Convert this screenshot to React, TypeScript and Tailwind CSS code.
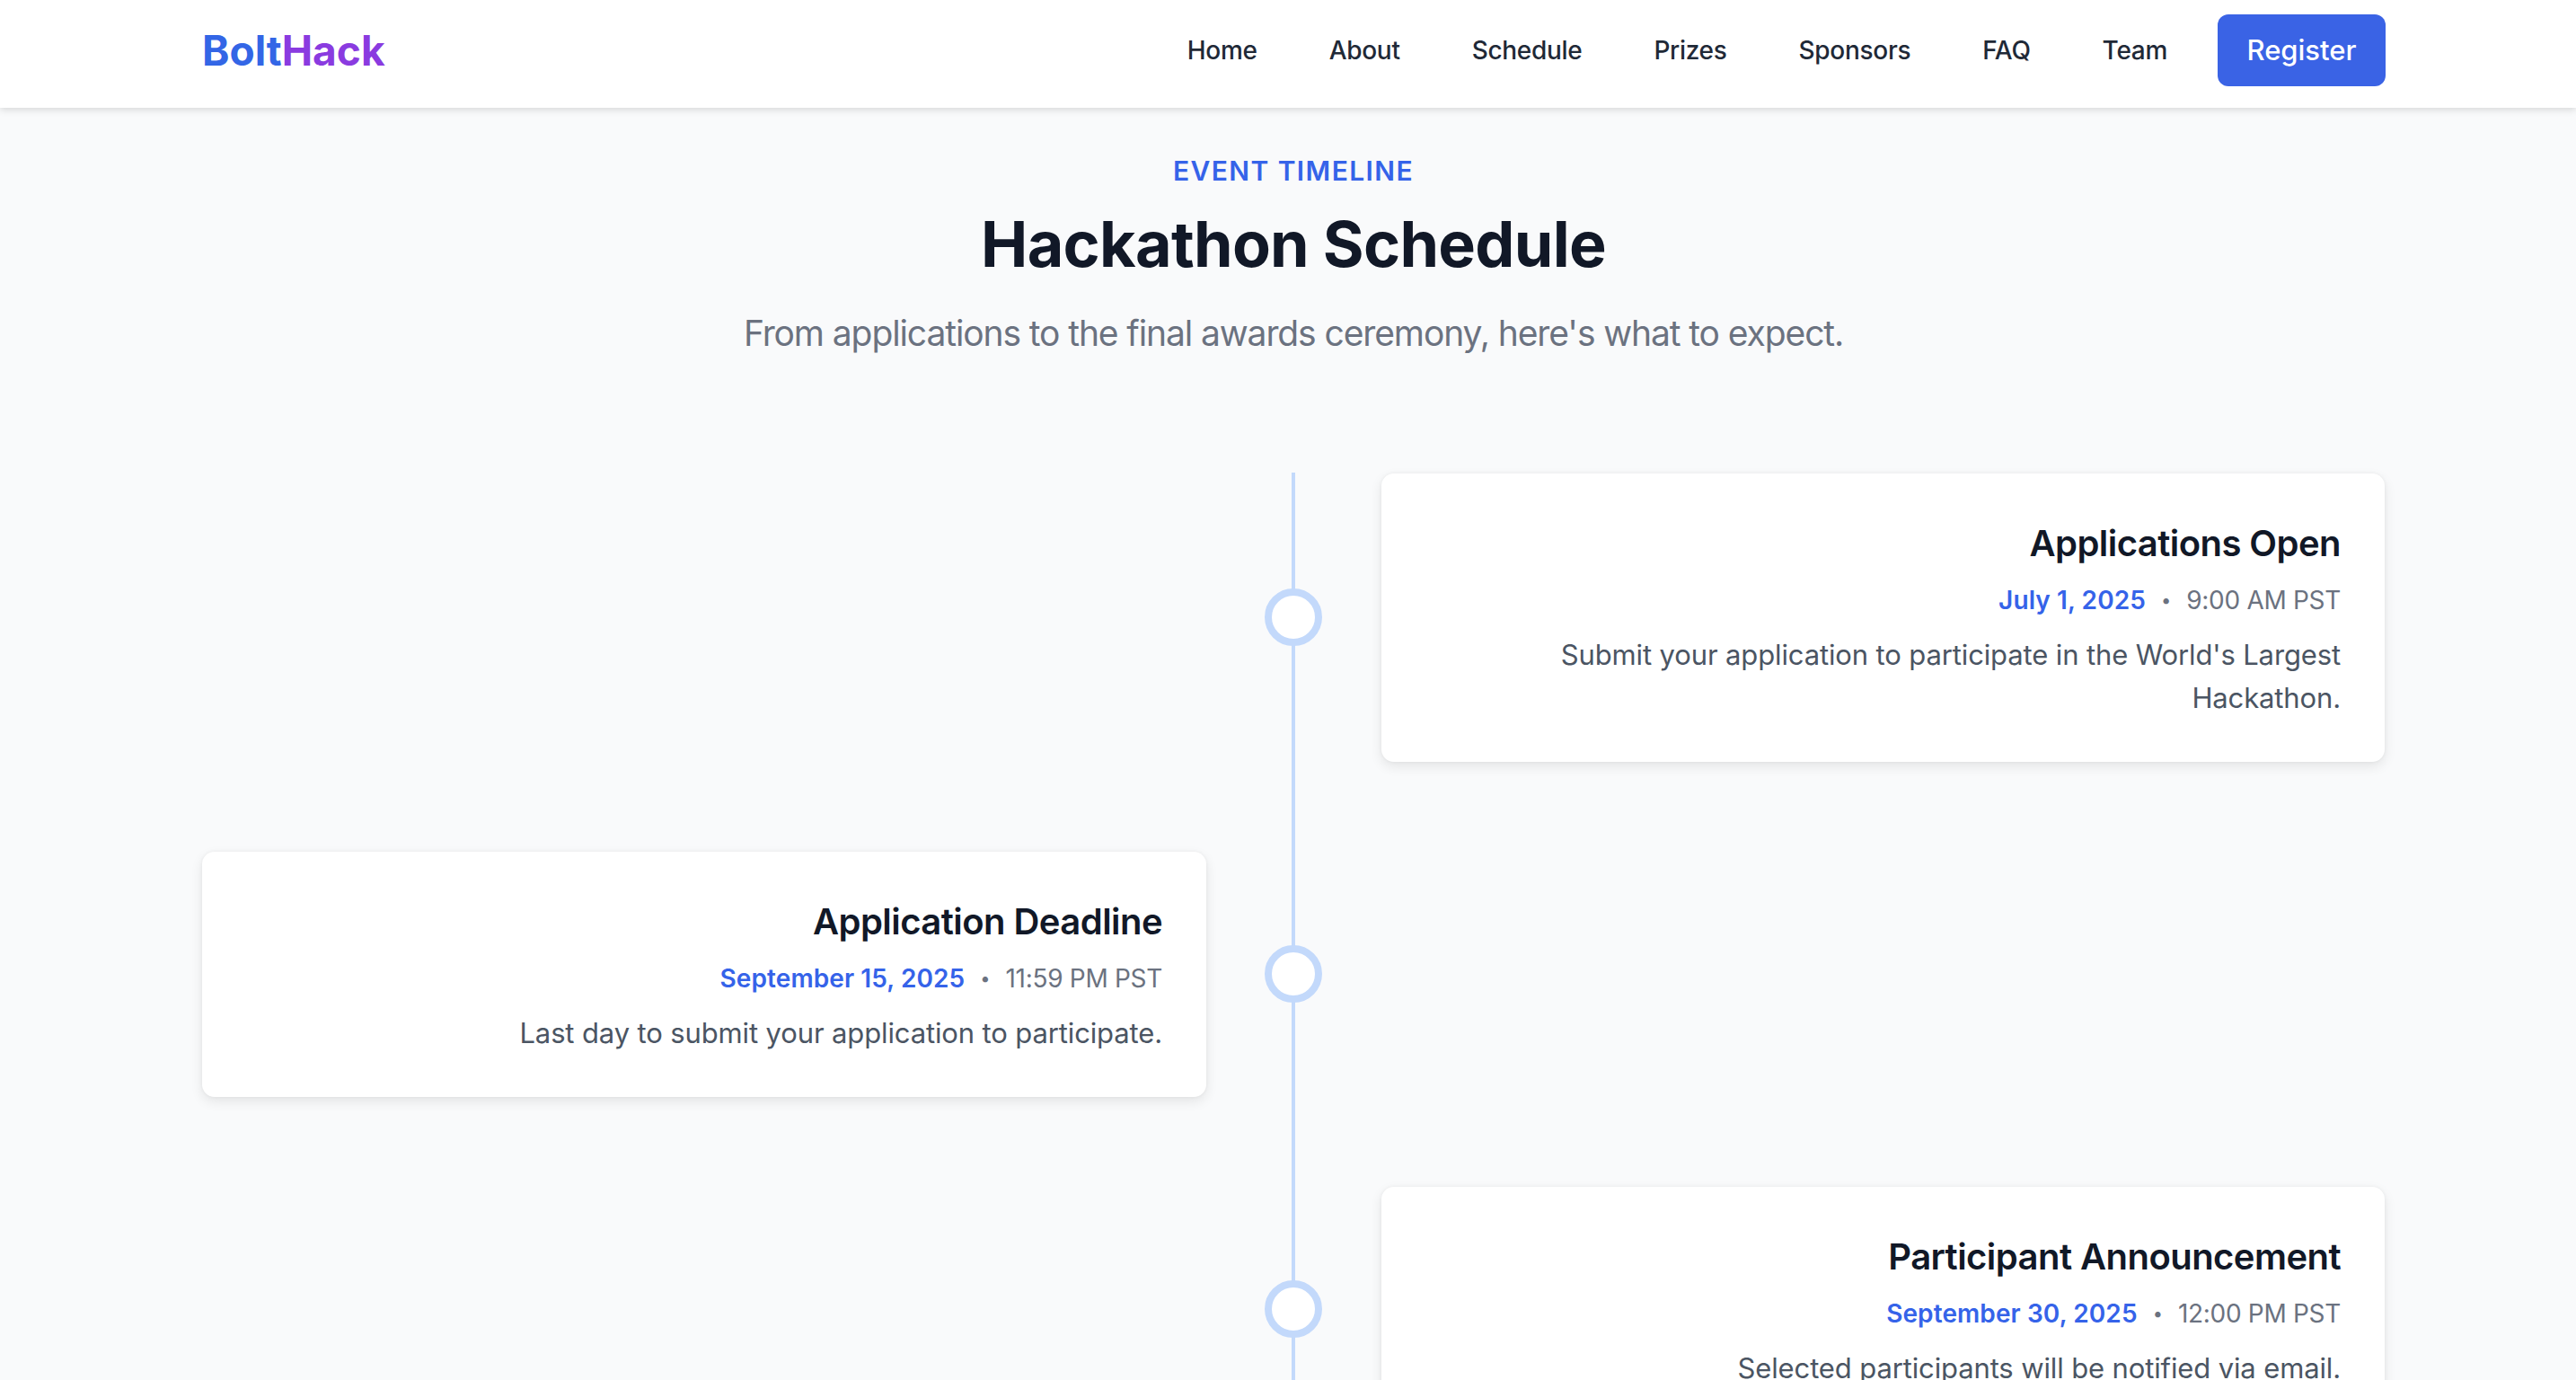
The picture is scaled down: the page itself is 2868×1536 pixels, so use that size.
const navLinks = ['Home', 'About', 'Schedule', 'Prizes', 'Sponsors', 'FAQ', 'Team']

type TimelineEvent = {
  title: string
  date: string
  time: string
  description: string
  side: 'left' | 'right'
}

const events: TimelineEvent[] = [
  {
    title: 'Applications Open',
    date: 'July 1, 2025',
    time: '9:00 AM PST',
    description: "Submit your application to participate in the World's Largest Hackathon.",
    side: 'right',
  },
  {
    title: 'Application Deadline',
    date: 'September 15, 2025',
    time: '11:59 PM PST',
    description: 'Last day to submit your application to participate.',
    side: 'left',
  },
  {
    title: 'Participant Announcement',
    date: 'September 30, 2025',
    time: '12:00 PM PST',
    description: 'Selected participants will be notified via email.',
    side: 'right',
  },
]

function EventCard({ event }: { event: TimelineEvent }) {
  return (
    <div className="mt-px rounded-[14px] bg-white px-[49px] pt-[50px] pb-[47px] text-right shadow-[0_5px_14px_rgba(0,0,0,0.09),0_0_4px_rgba(0,0,0,0.05)]">
      <h3 className="text-[40px] leading-[56px] font-semibold tracking-[-0.55px] text-[#111827]">{event.title}</h3>
      <div className="mt-[14px] flex items-center justify-end text-[28px] leading-[42px]">
        <span className="font-semibold tracking-[0.1px] text-[#3563e9]">{event.date}</span>
        <span className="mx-[17px] text-[20px] text-[#6b7280]">•</span>
        <span className="tracking-[-0.3px] text-[#6b7280]">{event.time}</span>
      </div>
      <p className="mt-[16px] text-[31px] leading-[48px] tracking-[-0.13px] text-[#4b5563]">{event.description}</p>
    </div>
  )
}

function App() {
  return (
    <div className="h-screen overflow-hidden bg-[#f9fafb] font-['Inter',sans-serif]">
      <header className="relative z-10 h-[120px] bg-white shadow-[0_2px_8px_rgba(0,0,0,0.15)]">
        <div className="flex h-full items-center justify-between pr-[212px] pb-[8px] pl-[225px]">
          <div className="text-[46px] font-bold">
            <span className="text-[#3366e6]">Bolt</span>
            <span className="text-[#8a3be0]">Hack</span>
          </div>
          <nav className="flex items-center gap-[56px]">
            <div className="flex items-center gap-[80px]">
              {navLinks.map((link) => (
                <a key={link} className="text-[28px] font-medium tracking-[-0.3px] text-[#1f2937]">
                  {link}
                </a>
              ))}
            </div>
            <button className="h-[80px] w-[187px] rounded-[12px] bg-[#3a63e5] text-[31px] font-medium text-white">
              Register
            </button>
          </nav>
        </div>
      </header>

      <main className="pr-[213px] pl-[225px]">
        <div className="pt-[48px] text-center">
          <p className="text-[30px] leading-[44px] font-semibold tracking-[1.4px] text-[#3563e9]">EVENT TIMELINE</p>
          <h1 className="mt-[18px] text-[70px] leading-[84px] font-bold tracking-[-0.7px] text-[#111827]">
            Hackathon Schedule
          </h1>
          <p className="mt-[28px] text-[39px] leading-[58px] tracking-[-1.1px] text-[#6b7280]">
            From applications to the final awards ceremony, here's what to expect.
          </p>
        </div>

        <div className="relative mt-[126px]">
          <div className="absolute top-0 bottom-0 left-[1213px] w-[4px] bg-[#c3d9fb]" />
          <div className="flex flex-col gap-[99px]">
            {events.map((event) => (
              <div key={event.title} className="grid grid-cols-[1118px_195px_1117px] items-center">
                <div>{event.side === 'left' && <EventCard event={event} />}</div>
                <div className="relative z-10 flex justify-center pr-[1px]">
                  <div className="h-[64px] w-[64px] rounded-full border-[8px] border-[#c3d9fb] bg-white" />
                </div>
                <div>{event.side === 'right' && <EventCard event={event} />}</div>
              </div>
            ))}
          </div>
        </div>
      </main>
    </div>
  )
}

export default App
